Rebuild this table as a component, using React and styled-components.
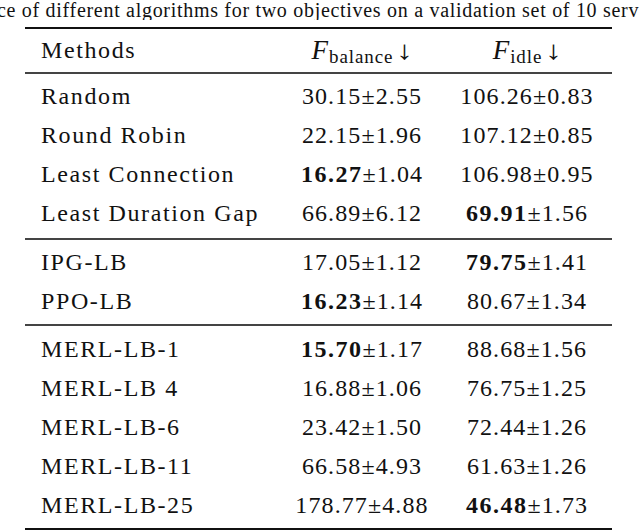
import React from "react";
import styled, { createGlobalStyle, css } from "styled-components";

const GlobalStyle = createGlobalStyle`
  html, body {
    margin: 0;
    padding: 0;
    background: #fff;
  }
`;

const serif = css`
  font-family: "Liberation Serif", serif;
`;

const sections = [
  [
    { name: "Random", balance: ["30.15", "2.55"], idle: ["106.26", "0.83"] },
    { name: "Round Robin", balance: ["22.15", "1.96"], idle: ["107.12", "0.85"] },
    { name: "Least Connection", balance: ["16.27", "1.04", true], idle: ["106.98", "0.95"] },
    { name: "Least Duration Gap", balance: ["66.89", "6.12"], idle: ["69.91", "1.56", true] },
  ],
  [
    { name: "IPG-LB", balance: ["17.05", "1.12"], idle: ["79.75", "1.41", true] },
    { name: "PPO-LB", balance: ["16.23", "1.14", true], idle: ["80.67", "1.34"] },
  ],
  [
    { name: "MERL-LB-1", balance: ["15.70", "1.17", true], idle: ["88.68", "1.56"] },
    { name: "MERL-LB 4", balance: ["16.88", "1.06"], idle: ["76.75", "1.25"] },
    { name: "MERL-LB-6", balance: ["23.42", "1.50"], idle: ["72.44", "1.26"] },
    { name: "MERL-LB-11", balance: ["66.58", "4.93"], idle: ["61.63", "1.26"] },
    { name: "MERL-LB-25", balance: ["178.77", "4.88"], idle: ["46.48", "1.73", true] },
  ],
];

const Page = styled.div`
  display: flex;
  flex-direction: column;
  width: 640px;
  height: 531px;
  overflow: hidden;
  color: #111;
  ${serif}
`;

const Caption = styled.div`
  ${serif}
  height: 20px;
  line-height: 20px;
  font-size: 20px;
  letter-spacing: 0.7px;
  white-space: nowrap;
  overflow: hidden;
  margin-left: -3px;
  margin-bottom: 7px;
`;

const Table = styled.div`
  margin-left: 25px;
  width: 587px;
  border-top: 2px solid #111;
  border-bottom: 2px solid #111;
`;

const Row = styled.div`
  ${serif}
  display: grid;
  grid-template-columns: 257px 160px 1fr;
  height: ${(p) => (p.$head ? "43px" : "39px")};
  line-height: ${(p) => (p.$head ? "43px" : "39px")};
  font-size: 24px;
  letter-spacing: 1.1px;
  white-space: nowrap;
`;

const Section = styled.div`
  padding: ${(p) => p.$pad};
  border-top: 2px solid #444;
`;

const Name = styled.div`
  ${serif}
  padding-left: 16px;
  letter-spacing: 1.6px;
`;

const Cell = styled.div`
  ${serif}
  text-align: center;
`;

const Mean = styled.span`
  ${serif}
  font-weight: ${(p) => (p.$bold ? 700 : 400)};
  letter-spacing: ${(p) => (p.$bold ? "1.5px" : "1.1px")};
`;

const Sym = styled.span`
  ${serif}
  font-style: italic;
  font-size: 27px;
  letter-spacing: 0;
`;

const Sub = styled.span`
  ${serif}
  font-size: 19px;
  position: relative;
  top: 4px;
  margin-left: 1px;
  letter-spacing: 0.9px;
`;

const Arrow = styled.span`
  ${serif}
  display: inline-block;
  margin-left: 5px;
  font-size: 26px;
  transform: scaleX(1.3);
`;

const Value = ({ v }) => (
  <Cell>
    <Mean $bold={v[2]}>{v[0]}</Mean>±{v[1]}
  </Cell>
);

const pads = ["3px 0 5px", "3px 0 3px", "4px 0 3px"];

export default function App() {
  return (
    <Page>
      <GlobalStyle />
      <Caption>ce of different algorithms for two objectives on a validation set of 10 serv</Caption>
      <Table>
        <Row $head>
          <Name>Methods</Name>
          <Cell>
            <Sym>F</Sym>
            <Sub>balance</Sub>
            <Arrow>↓</Arrow>
          </Cell>
          <Cell>
            <Sym>F</Sym>
            <Sub>idle</Sub>
            <Arrow>↓</Arrow>
          </Cell>
        </Row>
        {sections.map((rows, i) => (
          <Section key={i} $pad={pads[i]}>
            {rows.map((r) => (
              <Row key={r.name}>
                <Name>{r.name}</Name>
                <Value v={r.balance} />
                <Value v={r.idle} />
              </Row>
            ))}
          </Section>
        ))}
      </Table>
    </Page>
  );
}
